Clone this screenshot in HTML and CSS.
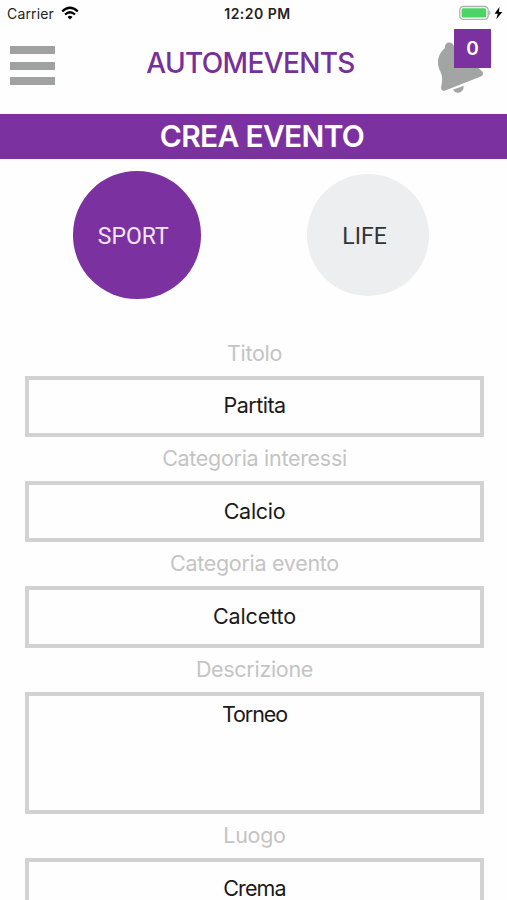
FILE: index.html
```
<!DOCTYPE html>
<html lang="it">

<head>
    <meta charset="UTF-8">
    <meta name="viewport" content="width=device-width, initial-scale=1.0">
    <title>Automevents - Crea evento</title>
    <link rel="stylesheet" href="styles.css">
</head>

<body>
    <div class="statusBar">
        <div class="carrier">
            <span>Carrier</span>
            <svg class="wifi" width="18" height="14" viewBox="0 0 18 14">
                <path d="M1.2 5.3 Q9 -1.9 16.8 5.3" fill="none" stroke="#000" stroke-width="2.3" />
                <path d="M4 8.5 Q9 4 14 8.5" fill="none" stroke="#000" stroke-width="2.2" />
                <path d="M6.5 11 Q9 8.6 11.5 11 L9 13.5 Z" />
            </svg>
        </div>
        <div class="clock">12:20 PM</div>
        <div class="power">
            <svg width="46" height="16" viewBox="0 0 46 16">
                <rect x="0.8" y="1.5" width="28.4" height="12.8" rx="3.6" fill="#fff" stroke="#b3b0ae" stroke-width="1.3" />
                <rect x="2.6" y="3.3" width="24.6" height="9.2" rx="1.5" fill="#4cd466" />
                <path d="M30.2 5.6 Q33 8 30.2 10.4 Z" fill="#b3b0ae" />
                <path d="M40.4 2 L35.6 8.8 H38.8 L37.2 14.2 L43.4 6.9 H40 Z" />
            </svg>
        </div>
    </div>

    <header class="header">
        <div class="menu">
            <span></span>
            <span></span>
            <span></span>
        </div>
        <h1 class="title">AUTOMEVENTS</h1>
        <div class="bell">
            <svg width="50" height="66" viewBox="0 0 50 66">
                <path d="M8 19 C7.4 15.5 9.5 13.4 12.2 13.4 C14.8 13.4 16 15 17 17 C27 15 33 19 36 29 C38 35 41 39 45 42.2 C46.8 44 46 46.6 43.8 47.6 L7.6 61.7 C5 62.4 3.6 60.4 4.2 57.6 C6.3 48 4.5 45 2 39.5 C-0.6 32 1.8 24 8 19 Z" fill="#a3a4a4" />
                <path d="M16 60.8 L26.6 56.8 C27.4 63.8 19.5 66 16 60.8 Z" fill="#a3a4a4" />
            </svg>
            <span class="badge">0</span>
        </div>
    </header>

    <h2 class="banner">CREA EVENTO</h2>

    <div class="types">
        <div class="circle sport">SPORT</div>
        <div class="circle life">LIFE</div>
    </div>

    <div class="form">
        <div class="label">Titolo</div>
        <div class="field partita">Partita</div>
        <div class="label">Categoria interessi</div>
        <div class="field">Calcio</div>
        <div class="label">Categoria evento</div>
        <div class="field calcetto">Calcetto</div>
        <div class="label">Descrizione</div>
        <div class="field area">Torneo</div>
        <div class="label">Luogo</div>
        <div class="field crema">Crema</div>
    </div>
</body>

</html>
```
FILE: styles.css
```
* {
    box-sizing: border-box;
    margin: 0;
    padding: 0;
}

body {
    height: 900px;
    overflow: hidden;
    background-color: #fefefe;
    font-family: Inter, "Liberation Sans", sans-serif;
}

.statusBar {
    display: grid;
    grid-template-columns: 1fr auto 1fr;
    align-items: center;
    height: 26px;
    padding: 0 2px 0 7px;
    font-size: 14px;
    color: #222;
}

.carrier {
    display: flex;
    align-items: center;
    gap: 7px;
    letter-spacing: 0.15px;
}

.clock {
    font-weight: 600;
    font-size: 14px;
    letter-spacing: 0.5px;
    margin-left: 3px;
}

.power {
    display: flex;
    justify-content: flex-end;
}

.header {
    display: flex;
    justify-content: space-between;
    height: 88px;
    padding: 3px 16px 0 10px;
}

.menu {
    display: flex;
    flex-direction: column;
    gap: 7.5px;
    width: 45px;
    padding-top: 17px;
}

.menu span {
    height: 8px;
    background-color: #a0a1a1;
}

.title {
    padding-top: 16px;
    margin-left: 9px;
    font-size: 28px;
    line-height: 36px;
    font-weight: 500;
    letter-spacing: -0.65px;
    color: #76309b;
}

.bell {
    position: relative;
    width: 54px;
    height: 66px;
}

.bell svg {
    position: absolute;
    left: 0;
    top: 0;
}

.badge {
    position: absolute;
    left: 17px;
    top: 0;
    width: 37px;
    height: 39px;
    background-color: #7b32a0;
    color: #fff;
    font-size: 19px;
    font-weight: 600;
    line-height: 40px;
    text-align: center;
}

.banner {
    height: 45px;
    background-color: #7b32a0;
    color: #fff;
    text-align: center;
    padding-left: 17px;
    font-size: 30px;
    font-weight: 600;
    letter-spacing: -0.7px;
    line-height: 45px;
}

.types {
    display: flex;
    align-items: center;
    gap: 106px;
    height: 152px;
    padding-left: 73px;
}

.circle {
    display: flex;
    align-items: center;
    justify-content: center;
    border-radius: 50%;
    font-family: Roboto, "Liberation Sans", sans-serif;
    font-size: 23px;
}

.sport {
    width: 127.5px;
    height: 127.5px;
    padding: 2px 7px 0 0;
    background-color: #7b32a0;
    color: #f3e6f8;
}

.life {
    width: 122px;
    height: 122px;
    padding: 2px 6px 0 0;
    background-color: #eceeef;
    color: #333;
}

.form {
    padding: 20.5px 23px 0 25px;
    text-align: center;
    font-size: 21.5px;
}

.label {
    height: 44px;
    line-height: 42px;
    letter-spacing: -0.3px;
    color: #c4c4c4;
}

.field {
    height: 61.4px;
    border: 4px solid #d2d2d2;
    line-height: 52px;
    letter-spacing: -0.3px;
    color: #1a1a1a;
}

.partita {
    line-height: 51px;
    letter-spacing: -0.5px;
}

.calcetto {
    letter-spacing: -0.1px;
}

.area {
    height: 122.8px;
    line-height: 36px;
    letter-spacing: -1.1px;
}

.crema {
    letter-spacing: -0.9px;
}
```
